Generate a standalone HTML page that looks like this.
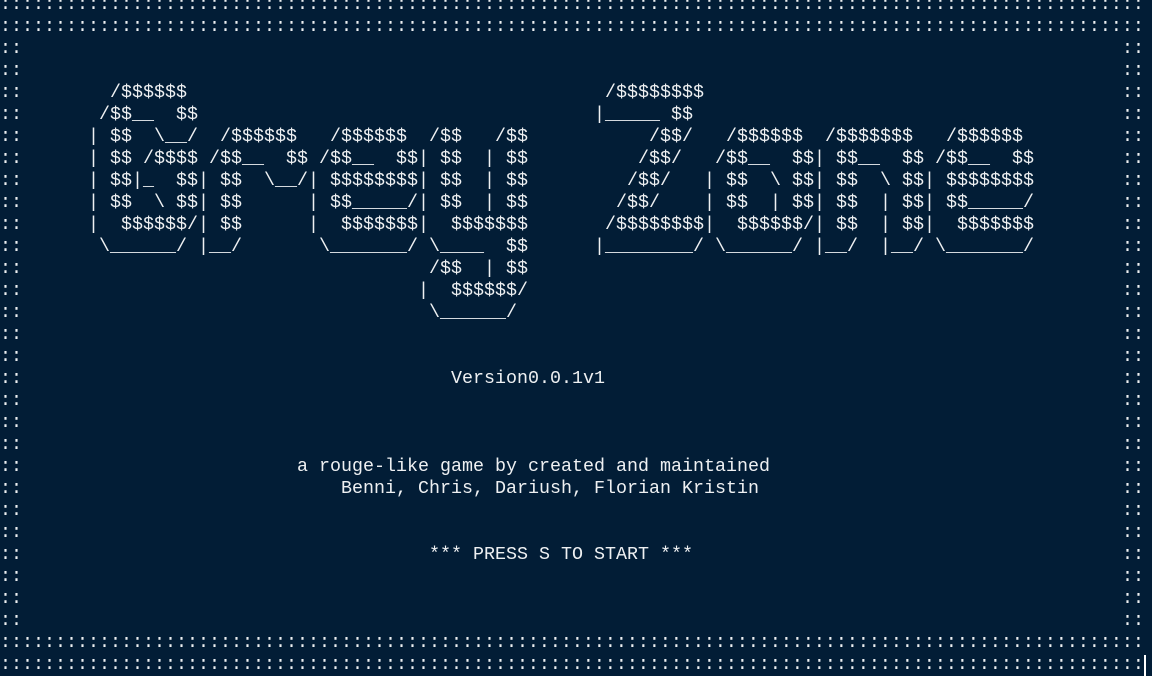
<!DOCTYPE html>
<html><head><meta charset="utf-8">
<style>
html,body{margin:0;padding:0;}
body{width:1152px;height:676px;overflow:hidden;background:#021d36;position:relative;}
pre{position:absolute;margin:0;padding:0;font-family:"Liberation Mono",monospace;font-size:18.33px;line-height:22px;color:#eef0f2;white-space:pre;}
#cur{position:absolute;left:1144px;top:655px;width:2px;height:21px;background:#fff;}
</style></head><body>
<pre style="left:0;top:-6px">::::::::::::::::::::::::::::::::::::::::::::::::::::::::::::::::::::::::::::::::::::::::::::::::::::::::
::::::::::::::::::::::::::::::::::::::::::::::::::::::::::::::::::::::::::::::::::::::::::::::::::::::::</pre>
<pre style="left:0;top:632px">::::::::::::::::::::::::::::::::::::::::::::::::::::::::::::::::::::::::::::::::::::::::::::::::::::::::
::::::::::::::::::::::::::::::::::::::::::::::::::::::::::::::::::::::::::::::::::::::::::::::::::::::::</pre>
<pre style="left:0;top:38px">::
::
::
::
::
::
::
::
::
::
::
::
::
::
::
::
::
::
::
::
::
::
::
::
::
::
::</pre>
<pre style="left:1122px;top:38px">::
::
::
::
::
::
::
::
::
::
::
::
::
::
::
::
::
::
::
::
::
::
::
::
::
::
::</pre>
<pre style="left:88px;top:82px">  /$$$$$$
 /$$__  $$
| $$  \__/
| $$ /$$$$
| $$|_  $$
| $$  \ $$
|  $$$$$$/
 \______/</pre>
<pre style="left:198px;top:126px">  /$$$$$$
 /$$__  $$
| $$  \__/
| $$
| $$
|__/</pre>
<pre style="left:308px;top:126px">  /$$$$$$
 /$$__  $$
| $$$$$$$$
| $$_____/
|  $$$$$$$
 \_______/</pre>
<pre style="left:418px;top:126px"> /$$   /$$
| $$  | $$
| $$  | $$
| $$  | $$
|  $$$$$$$
 \____  $$
 /$$  | $$
|  $$$$$$/
 \______/</pre>
<pre style="left:594px;top:82px"> /$$$$$$$$
|_____ $$
     /$$/
    /$$/
   /$$/
  /$$/
 /$$$$$$$$
|________/</pre>
<pre style="left:704px;top:126px">  /$$$$$$
 /$$__  $$
| $$  \ $$
| $$  | $$
|  $$$$$$/
 \______/</pre>
<pre style="left:814px;top:126px"> /$$$$$$$
| $$__  $$
| $$  \ $$
| $$  | $$
| $$  | $$
|__/  |__/</pre>
<pre style="left:924px;top:126px">  /$$$$$$
 /$$__  $$
| $$$$$$$$
| $$_____/
|  $$$$$$$
 \_______/</pre>
<pre style="left:451px;top:368px">Version0.0.1v1</pre>
<pre style="left:297px;top:456px">a rouge-like game by created and maintained
    Benni, Chris, Dariush, Florian Kristin</pre>
<pre style="left:429px;top:544px">*** PRESS S TO START ***</pre>
<div id="cur"></div>
</body></html>
